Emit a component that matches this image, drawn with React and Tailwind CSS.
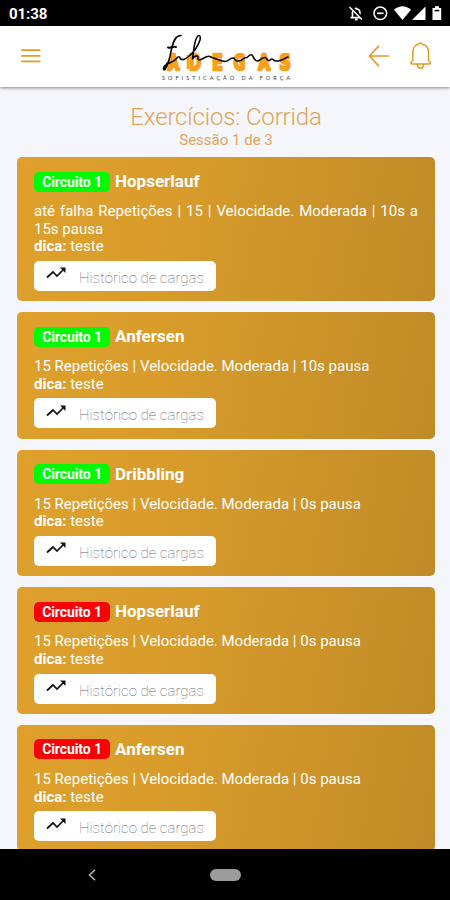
import React from 'react';

const exercises = [
  { name: 'Hopserlauf', done: true, text: 'até falha Repetições | 15 | Velocidade. Moderada | 10s a 15s pausa', height: 'h-[144px]' },
  { name: 'Anfersen', done: true, text: '15 Repetições | Velocidade. Moderada | 10s pausa', height: 'h-[126.4px]' },
  { name: 'Dribbling', done: true, text: '15 Repetições | Velocidade. Moderada | 0s pausa', height: 'h-[126.4px]' },
  { name: 'Hopserlauf', done: false, text: '15 Repetições | Velocidade. Moderada | 0s pausa', height: 'h-[126.4px]' },
  { name: 'Anfersen', done: false, text: '15 Repetições | Velocidade. Moderada | 0s pausa', height: 'h-[126.4px]' },
];

const StatusBar = () => (
  <div className="h-[26px] shrink-0 bg-black flex items-center justify-between pl-[9px] pr-[8px] pt-[2px] text-white">
    <span className="text-[15px] leading-none font-bold tracking-[-0.1px]">01:38</span>
    <svg width="94" height="18" viewBox="0 0 94 18" fill="none">
      <path d="M4.500 12V7.500a3.700 3.700 0 0 1 7.400 0V12M2.500 12.600h11.500M8.200 2.500V4M7 14.600h2.500" stroke="#fff" strokeWidth="1.700" />
      <path d="M2.500 1.500l12.500 12.500" stroke="#000" strokeWidth="3" />
      <path d="M1.500 2l12.500 12.500" stroke="#fff" strokeWidth="1.500" />
      <circle cx="32.300" cy="8.300" r="6.300" stroke="#fff" strokeWidth="1.500" />
      <path d="M29 8.300h6.600" stroke="#fff" strokeWidth="1.700" />
      <path d="M46 4.800C51-.1 58-.1 63 4.800L54.500 15z" fill="#fff" />
      <path d="M77.500 1.500V15H64z" fill="#fff" />
      <path d="M87 1.300h4V3h2.200v12H84.500V3H87z" fill="#fff" />
      <path d="M86.700 5.600h4.600" stroke="#000" strokeWidth="1.500" />
    </svg>
  </div>
);

const Logo = () => (
  <svg width="134" height="50" viewBox="0 0 134 50">
    <g fill="#f9a01b" stroke="#f9a01b" strokeWidth="2.500" fontFamily="'DejaVu Sans', sans-serif" fontWeight="700" fontSize="22" textAnchor="middle">
      <text transform="translate(12.500 37.500) scale(.64 1)">A</text>
      <text transform="translate(34 37.500) scale(.66 1)">D</text>
      <text transform="translate(56.500 37.500) scale(.72 1)">E</text>
      <text transform="translate(78.500 37.500) scale(.66 1)">G</text>
      <text transform="translate(103 37.500) scale(.68 1)">A</text>
      <text transform="translate(124 37.500) scale(.74 1)">S</text>
    </g>
    <path d="M6.500 36.800h5M14.500 36.800h5M97 36.800h5M105 36.800h5M27 23v14" stroke="#f9a01b" strokeWidth="2.600" />
    <path
      d="M20 3.500C14 3.500 12 10 10.500 17C9 25 7 34 4 37.500C2.500 39 1.500 36 4 33.500C8 30 13 30 15 27C17 24 19 24 19.500 27C21 28 24 27.500 27 25C32 21 37 14 39 8C40 3 37.500 2 35.500 6C33 11 32.500 20 31.500 27C33 24 37 22.500 37 25.500C36.500 29 39 28.500 43 26C47 23.500 48 24 51 25.500C56 27 59 28.500 64 29.500C68 29.500 68 26 72 26C75 26 73 29.500 77 29C82 28.500 83 25 86 25.500C88 24 89 22 91 23C93 25 93 29.500 97 29C100 28 101 25 104 25.500C107 26 105 29 108 28.500C110 28 110 26 112 27.500C115 31 121 28 127 25"
      fill="none" stroke="#080808" strokeWidth="1.600" strokeLinecap="round" strokeLinejoin="round"
    />
    <path d="M7 15.500C10 16.500 12 14 15 15M6.500 31L3.500 37" fill="none" stroke="#080808" strokeWidth="2" strokeLinecap="round" />
    <text x="1" y="47.500" textLength="128" lengthAdjust="spacing" fontFamily="Lato, sans-serif" fontSize="5.400" fill="#333">SOFISTICAÇÃO DA FORÇA</text>
  </svg>
);

const Header = () => (
  <header className="relative z-10 h-[61px] shrink-0 bg-white flex items-center justify-between pl-[20.5px] pr-[18px] shadow-[0_1px_3px_rgba(0,0,0,0.45)]">
    <svg width="20" height="14" viewBox="0 0 20 14" className="mb-[2px]" stroke="#e39a22" strokeWidth="1.700" strokeLinecap="round">
      <path d="M.8 1.200h18M.8 6.800h18M.8 12.400h18" />
    </svg>
    <div className="ml-[48px]"><Logo /></div>
    <div className="flex items-center gap-[20px] text-[#e39a22]">
      <svg width="22" height="22" viewBox="0 0 22 22" className="mb-[2px]" fill="none" stroke="currentColor" strokeWidth="1.700" strokeLinecap="round" strokeLinejoin="round">
        <path d="M10.500 1.200L1.500 11l9 9.800M1.500 11h19" />
      </svg>
      <svg width="22" height="28" viewBox="0 0 22 28" className="mb-[1px]" fill="none" stroke="currentColor" strokeWidth="1.500" strokeLinejoin="round">
        <path d="M8.700 2.300C9.500.6 11.500.6 12.300 2.300C16.500 3 18.500 6.500 18.500 10v8.300c0 1 2 1.500 2 2.700c0 .8-.5 1-1.200 1H1.700C1 22 .8 21.800.8 21c0-1.200 2-1.700 2-2.700V10c0-3.500 2-7 5.900-7.700zM7.500 22.500c.2 5 5.800 5 6 0" />
      </svg>
    </div>
  </header>
);

const HistoryButton = () => (
  <button className="mt-[5px] w-[182px] h-[30px] rounded-[5px] bg-white flex items-center pl-[12px]">
    <svg width="22" height="14" viewBox="0 0 22 14" className="mb-[5px] mr-[11px]" fill="none" stroke="#111" strokeWidth="1.700">
      <path d="M1 11.500l6-5.500 4 4 7-7" />
      <path d="M14 1.500h5.500V7z" fill="#111" stroke="none" />
    </svg>
    <span className="pt-[5px] text-[15px] leading-none font-thin text-[#666] whitespace-nowrap">Histórico de cargas</span>
  </button>
);

const ExerciseCard = ({ exercise }) => (
  <article className={`${exercise.height} shrink-0 rounded-[5px] bg-[linear-gradient(100deg,#dfa02c_0%,#d99c2b_35%,#c08b27_100%)] px-[17px] pt-[14px] text-white`}>
    <div className="flex items-center h-[20px]">
      <span className={`${exercise.done ? 'bg-[#00fa04]' : 'bg-[#fb0005]'} mt-[1px] w-[76px] h-[20px] rounded-[5px] flex items-center justify-center text-[14px] leading-none font-bold tracking-[-0.1px]`}>
        Circuito 1
      </span>
      <h2 className="ml-[5px] text-[17px] leading-5 font-bold">{exercise.name}</h2>
    </div>
    <p className="mt-[12px] text-[15px] leading-[17.6px] text-justify">{exercise.text}</p>
    <p className="text-[15px] leading-[17.6px]"><b>dica:</b> teste</p>
    <HistoryButton />
  </article>
);

const NavigationBar = () => (
  <div className="h-[51px] shrink-0 bg-black flex items-center pl-[88px]">
    <svg width="8" height="12" viewBox="0 0 8 12" fill="none" stroke="#aaa" strokeWidth="1.600">
      <path d="M7 .8L1.500 6 7 11.200" />
    </svg>
    <div className="ml-[114px] w-[31px] h-[12px] rounded-full bg-[#9c9c9c]" />
  </div>
);

const App = () => {
  return (
    <div className="w-full h-screen flex flex-col overflow-hidden bg-[#f5f6fb] font-[Roboto,sans-serif]">
      <StatusBar />
      <Header />
      <main className="flex-1 min-h-0 overflow-hidden flex flex-col pl-[17px] pr-[15px]">
        <div className="h-[70px] shrink-0 pt-[16px] text-center text-[#e0a458]">
          <h1 className="text-[24px] leading-[29px] font-light tracking-[-0.15px]">Exercícios: Corrida</h1>
          <p className="text-[15px] leading-[17px]">Sessão 1 de 3</p>
        </div>
        <div className="flex flex-col gap-[11.200px]">
          {exercises.map((exercise, i) => (
            <ExerciseCard key={i} exercise={exercise} />
          ))}
        </div>
      </main>
      <NavigationBar />
    </div>
  );
};

export default App;
